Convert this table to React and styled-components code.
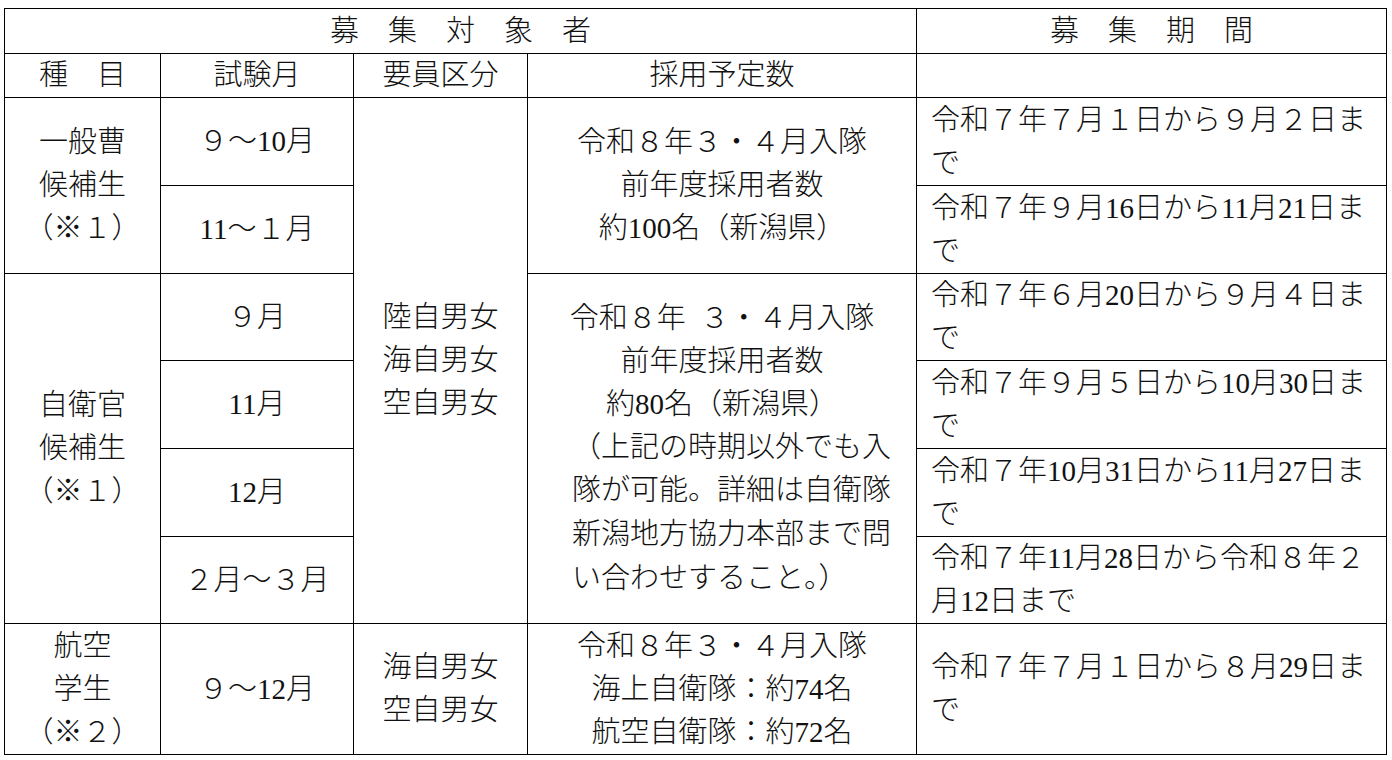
import React from "react";
import styled, { createGlobalStyle } from "styled-components";

const Global = createGlobalStyle`
  html, body { background: #fff; }
  body { margin: 8px 0 0 4px; }
`;

const Sheet = styled.table`
  border-collapse: collapse;
  table-layout: fixed;
  width: 1382px;
  font-family: "Liberation Serif", "Noto Sans CJK JP", serif;
  font-weight: 300;
  font-size: 29px;
  line-height: 43px;
  color: #111;
`;

const Row = styled.tr`
  height: ${(p) => p.$h}px;
`;

const Cell = styled.td`
  border: 1px solid #000;
  padding: 0;
  padding-left: ${(p) => (p.$left ? "14px" : "0")};
  text-align: ${(p) => (p.$left ? "left" : "center")};
  vertical-align: middle;
  white-space: nowrap;
  overflow: hidden;
`;

const Line = styled.div`
  white-space: nowrap;
`;

const Para = styled.div`
  text-align: left;
  padding-left: 44px;
  line-height: 43.7px;
`;

const Lines = ({ items }) => (
  <>
    {items.map((t, i) => (
      <Line key={i}>{t}</Line>
    ))}
  </>
);

const periods = [
  ["令和７年７月１日から９月２日ま", "で"],
  ["令和７年９月16日から11月21日ま", "で"],
  ["令和７年６月20日から９月４日ま", "で"],
  ["令和７年９月５日から10月30日ま", "で"],
  ["令和７年10月31日から11月27日ま", "で"],
  ["令和７年11月28日から令和８年２", "月12日まで"],
  ["令和７年７月１日から８月29日ま", "で"],
];

const Period = ({ n }) => (
  <Cell $left>
    <Lines items={periods[n]} />
  </Cell>
);

export default function App() {
  return (
    <>
      <Global />
      <Sheet>
        <colgroup>
          <col style={{ width: 156 }} />
          <col style={{ width: 193 }} />
          <col style={{ width: 174 }} />
          <col style={{ width: 389 }} />
          <col style={{ width: 470 }} />
        </colgroup>
        <tbody>
          <Row $h={45}>
            <Cell colSpan={4}>募　集　対　象　者</Cell>
            <Cell>募　集　期　間</Cell>
          </Row>
          <Row $h={44}>
            <Cell>種　目</Cell>
            <Cell>試験月</Cell>
            <Cell>要員区分</Cell>
            <Cell>採用予定数</Cell>
            <Cell />
          </Row>
          <Row $h={88}>
            <Cell rowSpan={2}>
              <Lines items={["一般曹", "候補生", "（※１）"]} />
            </Cell>
            <Cell>９～10月</Cell>
            <Cell rowSpan={6}>
              <Lines items={["陸自男女", "海自男女", "空自男女"]} />
            </Cell>
            <Cell rowSpan={2}>
              <Lines
                items={["令和８年３・４月入隊", "前年度採用者数", "約100名（新潟県）"]}
              />
            </Cell>
            <Period n={0} />
          </Row>
          <Row $h={88}>
            <Cell>11～１月</Cell>
            <Period n={1} />
          </Row>
          <Row $h={87}>
            <Cell rowSpan={4}>
              <Lines items={["自衛官", "候補生", "（※１）"]} />
            </Cell>
            <Cell>９月</Cell>
            <Cell rowSpan={4}>
              <Lines
                items={["令和８年\u2002３・４月入隊", "前年度採用者数", "約80名（新潟県）"]}
              />
              <Para>
                <Lines
                  items={[
                    "（上記の時期以外でも入",
                    "隊が可能。詳細は自衛隊",
                    "新潟地方協力本部まで問",
                    "い合わせすること。）",
                  ]}
                />
              </Para>
            </Cell>
            <Period n={2} />
          </Row>
          <Row $h={88}>
            <Cell>11月</Cell>
            <Period n={3} />
          </Row>
          <Row $h={88}>
            <Cell>12月</Cell>
            <Period n={4} />
          </Row>
          <Row $h={87}>
            <Cell>２月～３月</Cell>
            <Period n={5} />
          </Row>
          <Row $h={131}>
            <Cell>
              <Lines items={["航空", "学生", "（※２）"]} />
            </Cell>
            <Cell>９～12月</Cell>
            <Cell>
              <Lines items={["海自男女", "空自男女"]} />
            </Cell>
            <Cell>
              <Lines
                items={["令和８年３・４月入隊", "海上自衛隊：約74名", "航空自衛隊：約72名"]}
              />
            </Cell>
            <Period n={6} />
          </Row>
        </tbody>
      </Sheet>
    </>
  );
}
